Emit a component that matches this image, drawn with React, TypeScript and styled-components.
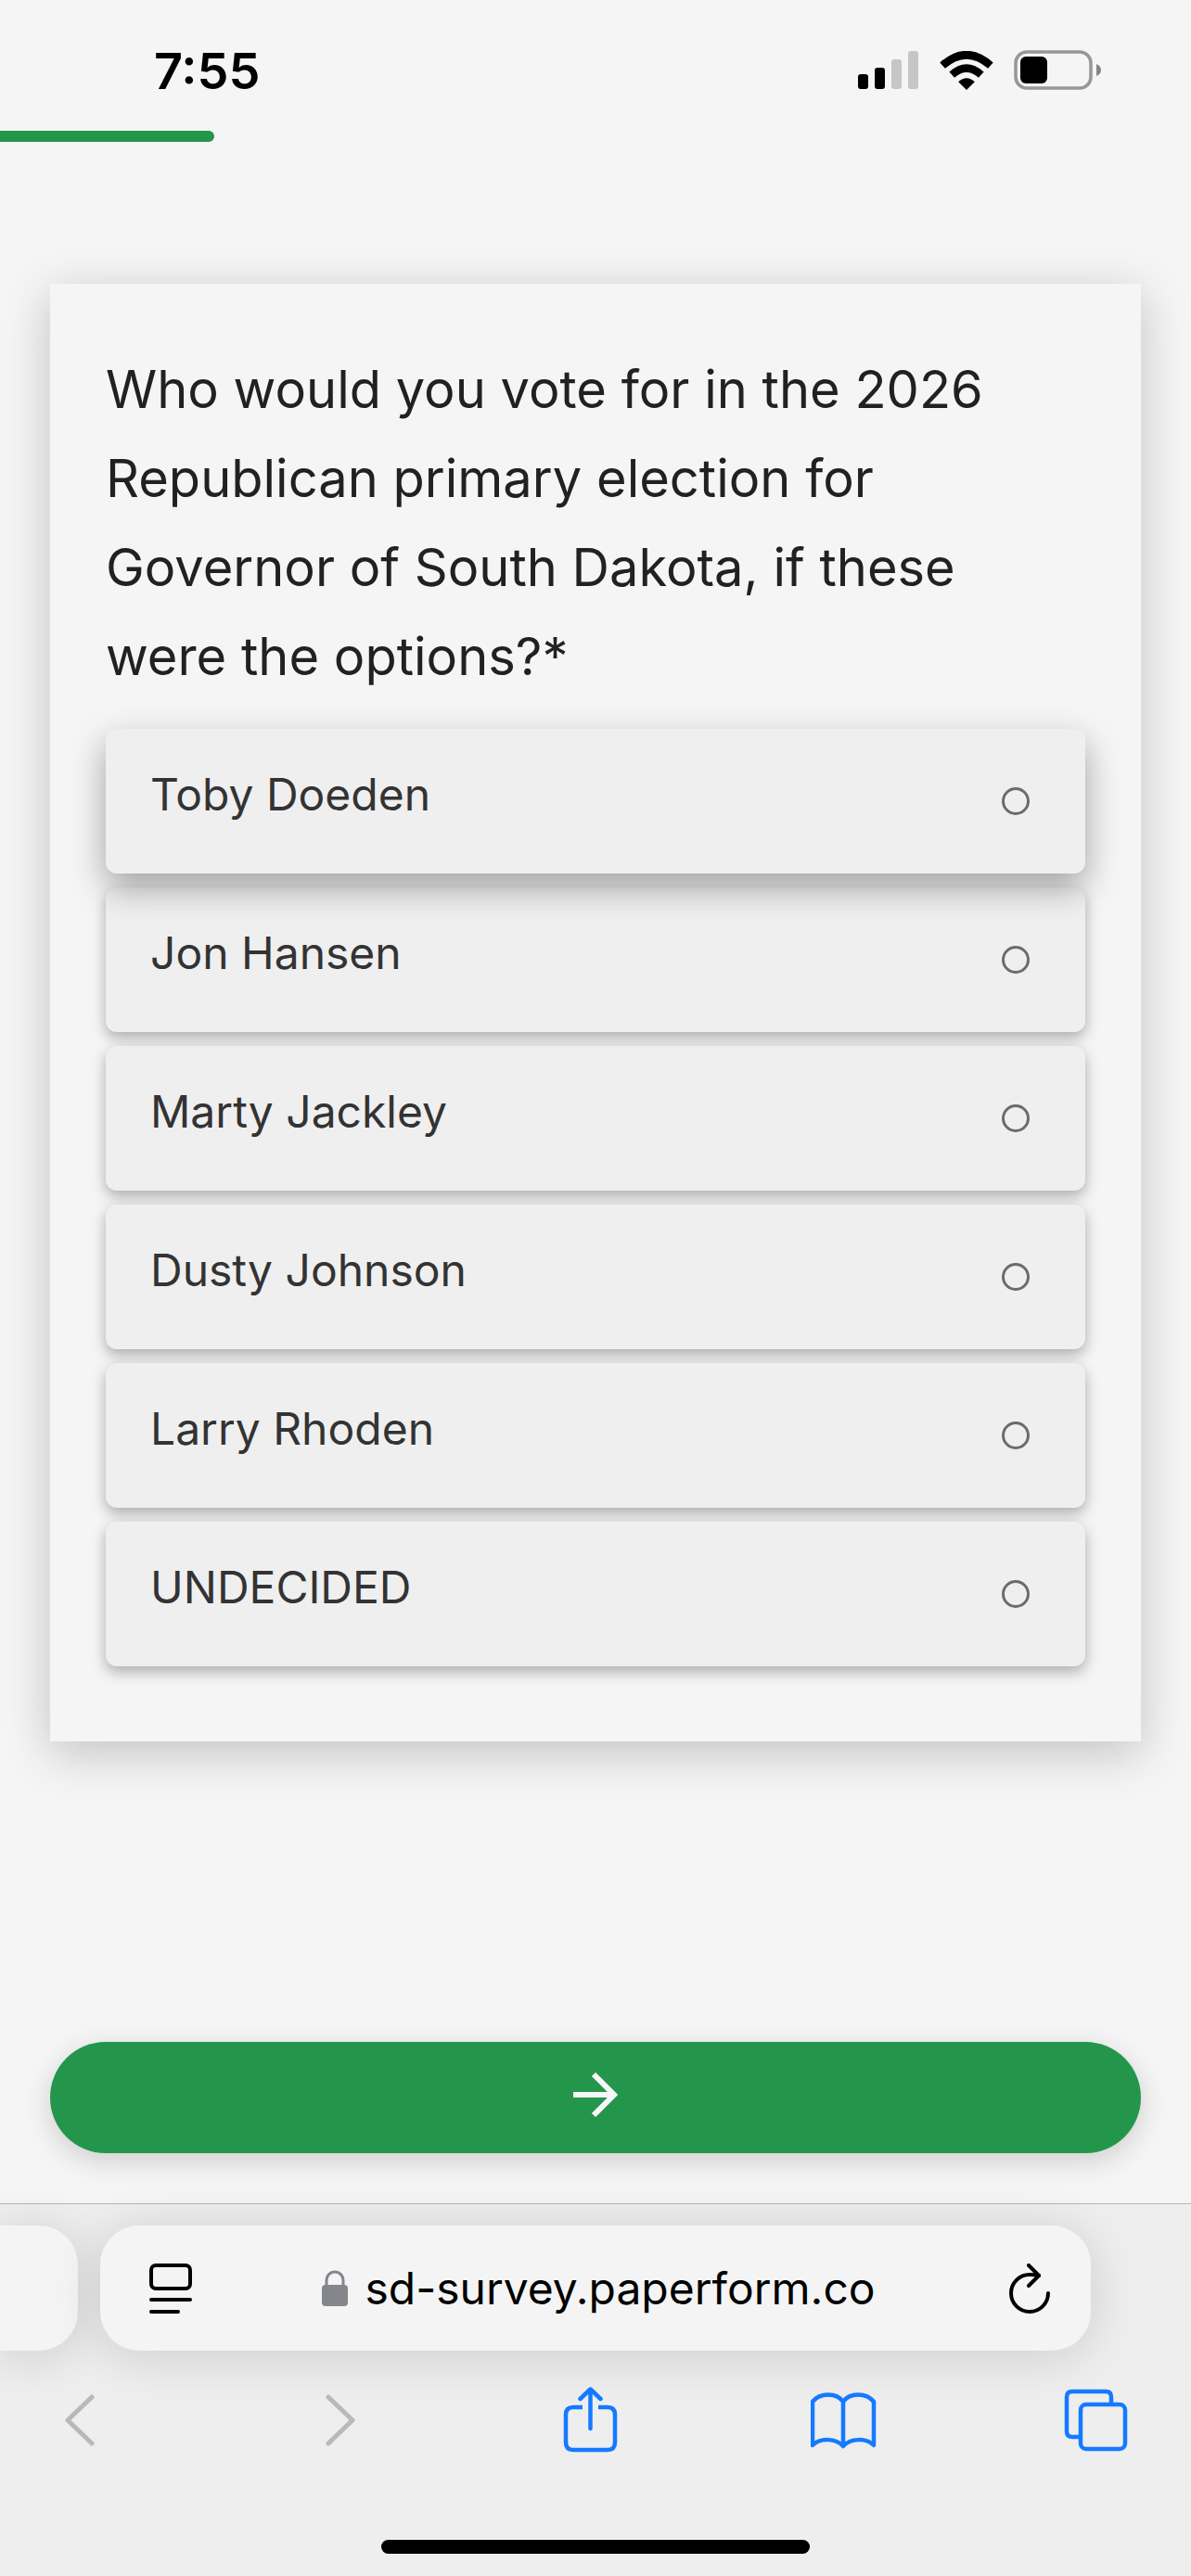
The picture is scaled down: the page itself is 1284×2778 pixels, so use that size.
import React, { useState } from 'react';
import styled, { createGlobalStyle } from 'styled-components';

const GlobalStyle = createGlobalStyle`
  *, *::before, *::after { box-sizing: border-box; }
  body {
    margin: 0;
    background: #f5f5f5;
    font-family: Inter, "Liberation Sans", sans-serif;
  }
`;

const Page = styled.div`
  display: flex;
  flex-direction: column;
  min-height: 100vh;
  overflow: hidden;
`;

const StatusBar = styled.header`
  display: flex;
  justify-content: space-between;
  align-items: center;
  height: 141px;
  padding: 10px 96px 0 166px;
`;

const Clock = styled.time`
  padding-top: 2px;
  font-size: 54px;
  line-height: 60px;
  font-weight: 600;
  color: #000;
`;

const StatusIcons = styled.div`
  display: flex;
  align-items: center;
  gap: 22px;

  svg { display: block; }
`;

const ProgressTrack = styled.div`
  height: 12px;
`;

const ProgressFill = styled.div<{ $percent: number }>`
  width: ${(p) => p.$percent}%;
  height: 100%;
  border-radius: 0 6px 6px 0;
  background: #23964b;
`;

const Form = styled.form`
  flex: 1;
  display: flex;
  flex-direction: column;
  justify-content: space-between;
  gap: 54px;
  padding: 153px 54px 54px;
`;

const Card = styled.fieldset`
  min-width: 0;
  margin: 0;
  padding: 66px 60px 81px;
  border: 0;
  background: #f5f5f5;
  box-shadow: 0 12px 48px rgba(0, 0, 0, 0.21);
`;

const Question = styled.legend`
  float: left;
  width: 100%;
  margin-bottom: 30px;
  padding: 0;
  font-size: 56px;
  line-height: 96px;
  color: #212121;
`;

const Options = styled.div`
  clear: both;
  display: flex;
  flex-direction: column;
  gap: 15px;
`;

const Option = styled.label<{ $raised: boolean }>`
  position: relative;
  z-index: ${(p) => (p.$raised ? 1 : 0)};
  display: flex;
  align-items: center;
  justify-content: space-between;
  height: 156px;
  padding: 0 60px 0 48px;
  border-radius: 12px;
  background: #efefef;
  box-shadow: ${(p) =>
    p.$raised ? '0 15px 36px rgba(0, 0, 0, 0.34)' : '0 6px 15px rgba(0, 0, 0, 0.3)'};
`;

const OptionText = styled.span`
  padding-bottom: 15px;
  font-size: 48px;
  line-height: 60px;
  color: #333;
`;

const Radio = styled.input`
  appearance: none;
  width: 30px;
  height: 30px;
  margin: 0;
  border: 3px solid #6b6b6b;
  border-radius: 50%;

  &:checked { border-color: #23964b; background: #23964b; }
`;

const NextButton = styled.button`
  display: flex;
  align-items: center;
  justify-content: center;
  height: 120px;
  padding: 0 0 6px;
  border: 0;
  border-radius: 60px;
  background: #23964b;
  color: #f7f7f7;
  box-shadow: 0 8px 30px rgba(0, 0, 0, 0.16);
`;

const Browser = styled.footer`
  display: flex;
  flex-direction: column;
  align-items: stretch;
  border-top: 1px solid #b5b5b5;
  background: #eee;
`;

const TabStrip = styled.div`
  display: flex;
  gap: 24px;
  padding: 23px 108px 0 0;
`;

const PreviousTab = styled.div`
  width: 84px;
  height: 135px;
  border-radius: 0 42px 42px 0;
  background: #f4f4f4;
  box-shadow: 0 6px 54px rgba(0, 0, 0, 0.14);
`;

const AddressBar = styled.div`
  flex: 1;
  display: flex;
  align-items: center;
  justify-content: space-between;
  height: 135px;
  padding: 0 44px 0 53px;
  border-radius: 42px;
  background: #f4f4f4;
  box-shadow: 0 6px 54px rgba(0, 0, 0, 0.14);
`;

const Address = styled.a`
  display: flex;
  align-items: center;
  gap: 18px;
  padding-right: 4px;
  font-size: 48px;
  line-height: 60px;
  color: #000;
  text-decoration: none;
`;

const IconButton = styled.button<{ $tone?: string }>`
  display: flex;
  flex-shrink: 0;
  padding: 0;
  border: 0;
  background: none;
  color: ${(p) => p.$tone ?? '#000'};
`;

const NavBar = styled.nav`
  display: flex;
  align-items: center;
  justify-content: space-between;
  height: 150px;
  padding: 0 66px 0 57px;
`;

const HomeIndicator = styled.div`
  align-self: center;
  width: 36%;
  height: 15px;
  margin: 54px 0 24px;
  border-radius: 8px;
  background: #000;
`;

const candidates = [
  'Toby Doeden',
  'Jon Hansen',
  'Marty Jackley',
  'Dusty Johnson',
  'Larry Rhoden',
  'UNDECIDED',
];

const SignalIcon = () => (
  <svg width="66" height="42" viewBox="0 0 66 42" aria-hidden="true">
    <rect x="0" y="25" width="11" height="16" rx="3" />
    <rect x="18" y="18" width="11" height="23" rx="3" />
    <rect x="36" y="9" width="11" height="32" rx="3" fill="#c6c6c6" />
    <rect x="54" y="0" width="11" height="41" rx="3" fill="#c6c6c6" />
  </svg>
);

const WifiIcon = () => (
  <svg width="58" height="42" viewBox="0 0 58 42" aria-hidden="true">
    <path d="M29 42 L20.2 33.2 Q29 25.5 37.8 33.2 Z" />
    <path d="M13.2 25.7 Q29 11.6 44.8 25.7" fill="none" stroke="#000" strokeWidth="8.5" />
    <path d="M3.1 15.6 Q29 -7.2 54.9 15.6" fill="none" stroke="#000" strokeWidth="8.5" />
  </svg>
);

const BatteryIcon = () => (
  <svg width="95" height="43" viewBox="0 0 95 43" aria-hidden="true">
    <rect x="2" y="2" width="81" height="39" rx="12" fill="none" stroke="#979797" strokeWidth="3.5" />
    <rect x="7" y="7" width="29" height="29" rx="6" />
    <path d="M89 15 Q94 17 94 21.5 Q94 26 89 28 Z" fill="#858585" />
  </svg>
);

const ArrowIcon = () => (
  <svg width="48" height="48" viewBox="0 0 48 48" fill="none" stroke="currentColor" strokeWidth="6" aria-hidden="true">
    <path d="M0 24 H42" />
    <path d="M22 2 L44 24 L22 46" />
  </svg>
);

const PageMenuIcon = () => (
  <svg width="46" height="54" viewBox="0 0 46 54" fill="none" stroke="currentColor" strokeWidth="4" strokeLinecap="round" aria-hidden="true">
    <rect x="2" y="2" width="42" height="25" rx="5" />
    <path d="M2 39 H44 M2 52 H31" />
  </svg>
);

const LockIcon = () => (
  <svg width="28" height="39" viewBox="0 0 28 39" fill="#85868b" aria-hidden="true">
    <rect x="0" y="16" width="28" height="23" rx="4" />
    <path d="M5 18 V11 A9 9 0 0 1 23 11 V18" fill="none" stroke="#85868b" strokeWidth="3" />
  </svg>
);

const ReloadIcon = () => (
  <svg width="44" height="54" viewBox="0 0 44 54" fill="none" stroke="currentColor" strokeWidth="4" strokeLinecap="round" strokeLinejoin="round" aria-hidden="true">
    <path d="M42 32 A20 20 0 1 1 22 12 Q27 12 32 13" />
    <path d="M21 2 L32 13 L21 24" />
  </svg>
);

const ChevronIcon = ({ d }: { d: string }) => (
  <svg width="72" height="56" viewBox="0 0 72 56" fill="none" stroke="currentColor" strokeWidth="5" strokeLinecap="round" strokeLinejoin="round" aria-hidden="true">
    <path d={d} />
  </svg>
);

const ShareIcon = () => (
  <svg width="72" height="72" viewBox="0 0 72 72" fill="none" stroke="currentColor" strokeWidth="4.5" strokeLinecap="round" strokeLinejoin="round" aria-hidden="true">
    <path d="M26 22 H16 Q8 22 8 30 V60 Q8 68 16 68 H53 Q61 68 61 60 V30 Q61 22 53 22 H43" strokeLinecap="butt" />
    <path d="M34.5 45 V2.5 M23.5 13 L34.5 2.5 L45.5 13" />
  </svg>
);

const BookIcon = () => (
  <svg width="72" height="64" viewBox="0 0 72 64" fill="none" stroke="currentColor" strokeWidth="4.5" strokeLinecap="round" strokeLinejoin="round" aria-hidden="true">
    <path d="M35 12 C28 2 10 2 2 12 V59 C10 51 27 51 35 60 C43 51 60 51 68 59 V12 C60 2 42 2 35 12 V60" />
  </svg>
);

const TabsIcon = () => (
  <svg width="72" height="68" viewBox="0 0 72 68" fill="none" stroke="currentColor" strokeWidth="4.5" aria-hidden="true">
    <path d="M19 52 H10 Q4 52 4 46 V9 Q4 3 10 3 H46 Q52 3 52 9 V16" />
    <rect x="19" y="17" width="48" height="48" rx="6" />
  </svg>
);

export default function App() {
  const [choice, setChoice] = useState('');

  return (
    <>
      <GlobalStyle />
      <Page>
        <StatusBar>
          <Clock>7:55</Clock>
          <StatusIcons>
            <SignalIcon />
            <WifiIcon />
            <BatteryIcon />
          </StatusIcons>
        </StatusBar>
        <ProgressTrack role="progressbar" aria-label="Survey progress" aria-valuenow={18}>
          <ProgressFill $percent={18} />
        </ProgressTrack>
        <Form onSubmit={(e) => e.preventDefault()}>
          <Card>
            <Question>
              Who would you vote for in the 2026
              <br />
              Republican primary election for
              <br />
              Governor of South Dakota, if these
              <br />
              were the options?*
            </Question>
            <Options>
              {candidates.map((name, i) => (
                <Option key={name} $raised={i === 0}>
                  <OptionText>{name}</OptionText>
                  <Radio
                    type="radio"
                    name="candidate"
                    value={name}
                    checked={choice === name}
                    onChange={() => setChoice(name)}
                  />
                </Option>
              ))}
            </Options>
          </Card>
          <NextButton type="submit" aria-label="Next">
            <ArrowIcon />
          </NextButton>
        </Form>
        <Browser>
          <TabStrip>
            <PreviousTab />
            <AddressBar>
              <IconButton type="button" aria-label="Page menu">
                <PageMenuIcon />
              </IconButton>
              <Address href="#">
                <LockIcon />
                sd-survey.paperform.co
              </Address>
              <IconButton type="button" aria-label="Reload">
                <ReloadIcon />
              </IconButton>
            </AddressBar>
          </TabStrip>
          <NavBar>
            <IconButton type="button" aria-label="Back" $tone="#b9b9b9">
              <ChevronIcon d="M42 3 L16 28 L42 53" />
            </IconButton>
            <IconButton type="button" aria-label="Forward" $tone="#b9b9b9">
              <ChevronIcon d="M25 3 L51 28 L25 53" />
            </IconButton>
            <IconButton type="button" aria-label="Share" $tone="#147aff">
              <ShareIcon />
            </IconButton>
            <IconButton type="button" aria-label="Bookmarks" $tone="#147aff">
              <BookIcon />
            </IconButton>
            <IconButton type="button" aria-label="Tabs" $tone="#147aff">
              <TabsIcon />
            </IconButton>
          </NavBar>
          <HomeIndicator />
        </Browser>
      </Page>
    </>
  );
}
